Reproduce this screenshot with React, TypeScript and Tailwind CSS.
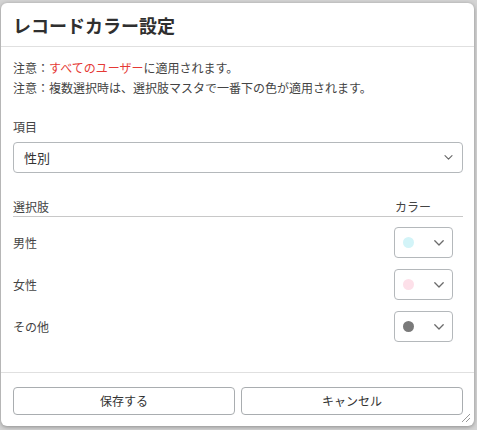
import React from "react";

const font = {
  fontFamily: '"Noto Sans CJK JP", "Noto Sans", sans-serif',
};

function Chevron({ w = 10, h = 6, color = "#666" }: { w?: number; h?: number; color?: string }) {
  return (
    <svg width={w} height={h} viewBox="0 0 10 6" fill="none">
      <polyline points="0.8,0.8 5,5 9.2,0.8" stroke={color} strokeWidth="1.3" strokeLinecap="round" strokeLinejoin="round" />
    </svg>
  );
}

type Option = { label: string; color: string };

const options: Option[] = [
  { label: "男性", color: "#d3f4f8" },
  { label: "女性", color: "#fde0e9" },
  { label: "その他", color: "#7a7a7a" },
];

function ColorSelect({ color }: { color: string }) {
  return (
    <div className="box-border flex h-[31px] w-[59px] items-center justify-between rounded-[4px] border border-[#b4b8bb] bg-white pl-[8px] pr-[8px]">
      <span className="block h-[11px] w-[11px] rounded-full" style={{ backgroundColor: color }} />
      <Chevron w={10} h={6} color="#6b6b6b" />
    </div>
  );
}

export default function App() {
  return (
    <div className="relative h-[430px] w-[477px] overflow-hidden bg-[#d4d4d4]" style={font}>
      <div className="pl-[1px] pt-[3px]">
        <div className="relative box-border flex h-[423px] w-[473px] flex-col rounded-[6px] bg-white text-[#333] shadow-[0_1px_4px_rgba(0,0,0,0.35)]">
          {/* header */}
          <div className="box-border flex h-[44px] items-center border-b border-[#e0e0e0] pl-3 pr-[11px]">
            <h1 className="text-[18px] font-bold leading-[26px] text-[#2f2f2f]">レコードカラー設定</h1>
          </div>

          {/* body */}
          <div className="flex flex-col pb-[30px] pl-3 pr-[11px] pt-[11px]">
            <p className="text-[12px] leading-[20px] text-[#444]">
              注意：<span className="text-[#e53935]">すべてのユーザー</span>に適用されます。
            </p>
            <p className="text-[12px] leading-[20px] text-[#444]">
              注意：複数選択時は、選択肢マスタで一番下の色が適用されます。
            </p>

            <label className="mt-[19px] text-[12px] leading-[20px] text-[#444]">項目</label>
            <div className="mt-[5px] box-border flex h-[31px] items-center justify-between rounded-[4px] border border-[#b4b8bb] pl-[10px] pr-[9px]">
              <span className="text-[13px] text-[#333]">性別</span>
              <Chevron w={9} h={5} color="#666" />
            </div>

            <div className="mt-[24px] box-border flex h-[20px] items-start border-b border-[#c8c8c8] text-[12px] leading-[19px] text-[#444]">
              <span className="flex-1">選択肢</span>
              <span className="w-[69px] pl-[1px]">カラー</span>
            </div>

            <div className="mt-[10px] flex flex-col gap-[11px]">
              {options.map((o) => (
                <div key={o.label} className="flex h-[31px] items-center">
                  <span className="flex-1 text-[12px] text-[#444]">{o.label}</span>
                  <div className="w-[69px]">
                    <ColorSelect color={o.color} />
                  </div>
                </div>
              ))}
            </div>
          </div>

          {/* footer */}
          <div className="flex gap-[6px] border-t border-[#e0e0e0] pb-[11px] pl-3 pr-[11px] pt-[14px]">
            <button className="box-border h-[28px] flex-1 rounded-[4px] border border-[#a9adb0] bg-white text-[12px] text-[#333]">
              保存する
            </button>
            <button className="box-border h-[28px] flex-1 rounded-[4px] border border-[#a9adb0] bg-white text-[12px] text-[#333]">
              キャンセル
            </button>
          </div>

          {/* resize grip */}
          <svg className="absolute bottom-[3px] right-[3px]" width="10" height="10" viewBox="0 0 10 10">
            <line x1="1" y1="9" x2="9" y2="1" stroke="#999" strokeWidth="1" />
            <line x1="5" y1="9" x2="9" y2="5" stroke="#999" strokeWidth="1" />
          </svg>
        </div>
      </div>
    </div>
  );
}
